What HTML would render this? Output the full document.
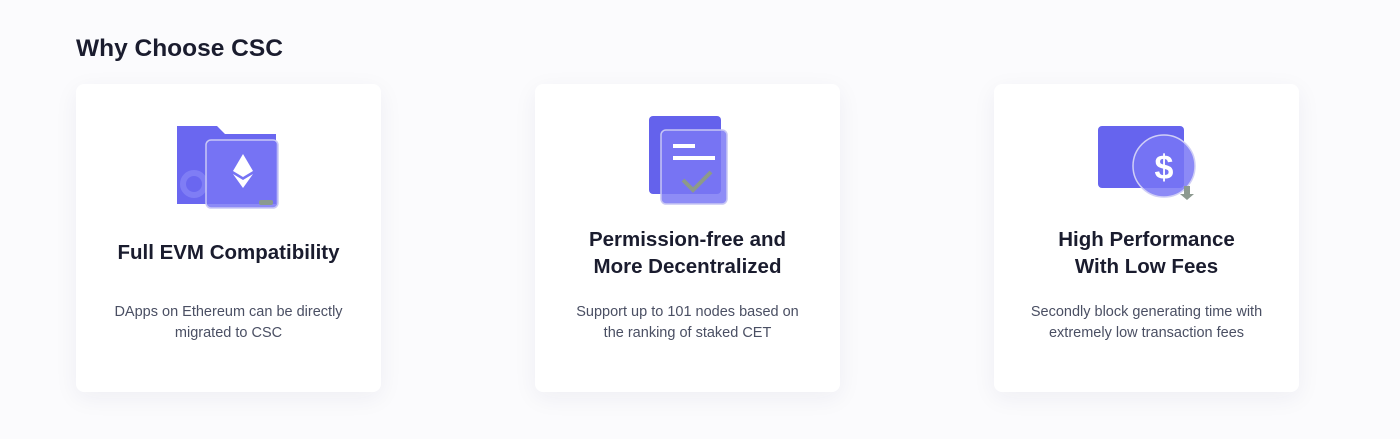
<!DOCTYPE html>
<html><head><style>
body{margin:0;width:1400px;height:439px;background:#fbfbfd;font-family:"Liberation Sans",sans-serif;position:relative;overflow:hidden}
h1{position:absolute;left:76px;top:35px;margin:0;font-size:24.5px;font-weight:bold;color:#1a1c2e}
.card{position:absolute;top:84px;width:305px;height:308px;background:#fff;border-radius:8px;box-shadow:0 6px 24px rgba(40,40,90,0.06);text-align:center}
.t{position:absolute;left:0;right:0;font-size:20.5px;font-weight:bold;color:#1a1c2e;line-height:27px}
.d{position:absolute;left:0;right:0;top:218px;font-size:14.5px;color:#4a4f63;line-height:21px}
svg{position:absolute}
</style></head><body>
<h1>Why Choose CSC</h1>
<div class="card" style="left:76px">
<svg style="left:98px;top:38px" width="112" height="90" viewBox="0 0 112 90">
<path d="M3 4h40l8 8h51v70H3z" fill="#6a67f0"/>
<circle cx="20" cy="62" r="11" fill="none" stroke="#7f7df5" stroke-width="6"/>
<rect x="32" y="18" width="72" height="68" rx="5" fill="rgba(120,118,245,0.85)" stroke="#c9c8f6" stroke-width="1.5"/>
<path d="M69 32l-10 17 10 6 10-6z" fill="#fff"/><path d="M59 52l10 14 10-14-10 6z" fill="#fff"/>
<rect x="85" y="78" width="14" height="5" rx="2" fill="#8a9a90"/>
</svg>
<div class="t" style="top:155px">Full EVM Compatibility</div>
<div class="d">DApps on Ethereum can be directly<br>migrated to CSC</div>
</div>
<div class="card" style="left:535px">
<svg style="left:112px;top:30px" width="84" height="96" viewBox="0 0 84 96">
<rect x="2" y="2" width="72" height="78" rx="4" fill="#6462ec"/>
<rect x="14" y="16" width="66" height="74" rx="5" fill="rgba(122,120,245,0.85)" stroke="#c7c6f4" stroke-width="1.5"/>
<rect x="26" y="30" width="22" height="4" fill="#fff"/><rect x="26" y="42" width="42" height="4" fill="#fff"/>
<path d="M36 66l10 10 18-18" fill="none" stroke="#8d9a88" stroke-width="4"/>
</svg>
<div class="t" style="top:142px">Permission-free and<br>More Decentralized</div>
<div class="d">Support up to 101 nodes based on<br>the ranking of staked CET</div>
</div>
<div class="card" style="left:994px">
<svg style="left:104px;top:40px" width="104" height="80" viewBox="0 0 104 80">
<rect x="0" y="2" width="86" height="62" rx="4" fill="#6664ee"/>
<circle cx="66" cy="42" r="31" fill="rgba(120,118,245,0.85)" stroke="#d0cff6" stroke-width="1.5"/>
<text x="66" y="55" text-anchor="middle" font-size="34" font-weight="bold" fill="#fff" font-family="Liberation Sans">$</text>
<path d="M86 62h6v8h4l-7 6-7-6h4z" fill="#8d9a90"/>
</svg>
<div class="t" style="top:142px">High Performance<br>With Low Fees</div>
<div class="d">Secondly block generating time with<br>extremely low transaction fees</div>
</div>
</body></html>
